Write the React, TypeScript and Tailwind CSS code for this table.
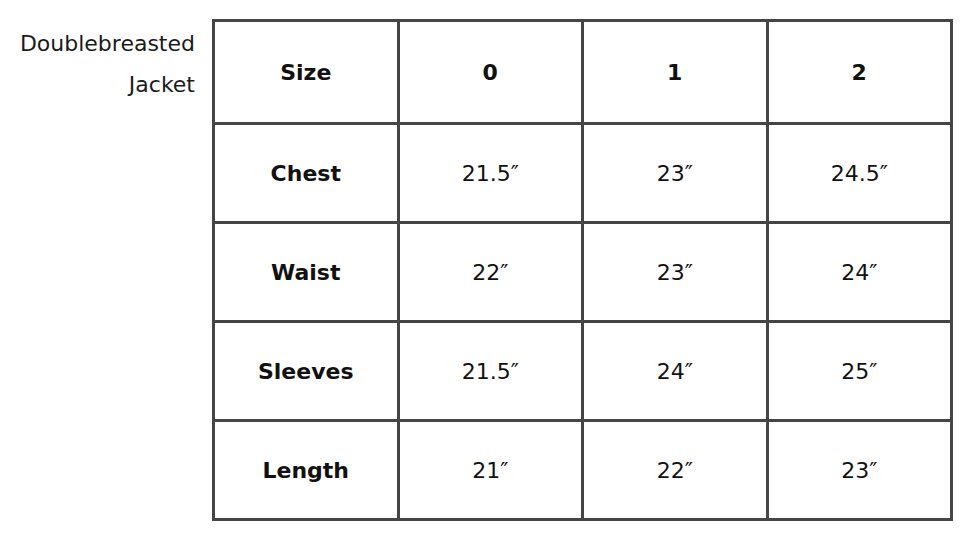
import { Fragment } from 'react';

const columns = ['Size', '0', '1', '2'];

const rows = [
    { label: 'Chest', values: ['21.5″', '23″', '24.5″'] },
    { label: 'Waist', values: ['22″', '23″', '24″'] },
    { label: 'Sleeves', values: ['21.5″', '24″', '25″'] },
    { label: 'Length', values: ['21″', '22″', '23″'] },
];

export default function App() {
    return (
        <div className="flex h-[540px] w-[960px] bg-white pt-[19px] text-[22px] text-[#111] [font-family:'DejaVu_Sans',Verdana,sans-serif]">
            <div className="w-[212px] pr-[17px] pt-[4px] text-right leading-[41px] text-[#1a1a1a]">
                Doublebreasted
                <br />
                Jacket
            </div>
            <div className="grid h-fit grid-cols-[repeat(4,181.5px)] grid-rows-[100px_repeat(4,96px)] gap-[3px] border-[3px] border-[#454545] bg-[#454545]">
                {columns.map((col) => (
                    <div key={col} className="flex items-center justify-center bg-white font-bold">
                        {col}
                    </div>
                ))}
                {rows.map((row) => (
                    <Fragment key={row.label}>
                        <div className="flex items-center justify-center bg-white font-bold">{row.label}</div>
                        {row.values.map((v, i) => (
                            <div key={i} className="flex items-center justify-center bg-white">
                                {v}
                            </div>
                        ))}
                    </Fragment>
                ))}
            </div>
        </div>
    );
}
